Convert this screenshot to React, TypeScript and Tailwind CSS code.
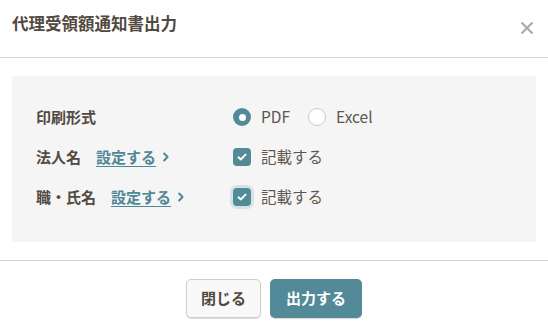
import { useState } from "react";

const FONT = "font-['Noto_Sans_CJK_JP','Noto_Sans',sans-serif]";

function Check() {
  return (
    <svg width="10" height="8" viewBox="0 0 10 8" fill="none">
      <path d="M1.5 4.2 3.9 6.4 8.5 1.6" stroke="white" strokeWidth="2" strokeLinecap="round" strokeLinejoin="round" />
    </svg>
  );
}

function Checkbox({ focused }: { focused?: boolean }) {
  return (
    <span
      className={`flex h-[18px] w-[18px] items-center justify-center rounded-[4px] bg-[#528b97] ${
        focused ? "ring-[3px] ring-[#d3e3e6]" : ""
      }`}
    >
      <Check />
    </span>
  );
}

function Radio({ checked }: { checked: boolean }) {
  return checked ? (
    <span className="flex h-[18px] w-[18px] items-center justify-center rounded-full bg-[#528b97]">
      <span className="h-[7px] w-[7px] rounded-full bg-white" />
    </span>
  ) : (
    <span className="h-[18px] w-[18px] rounded-full border border-[#cfcac4] bg-white" />
  );
}

function SetLink() {
  return (
    <a className="ml-[15px] flex items-center gap-[7px] text-[15px] font-bold text-[#4f8796] underline underline-offset-[3px]">
      設定する
      <svg width="6" height="10" viewBox="0 0 6 10" fill="none">
        <path d="M1.2 1.5 4.5 5 1.2 8.5" stroke="#4f8796" strokeWidth="2" strokeLinecap="round" strokeLinejoin="round" />
      </svg>
    </a>
  );
}

export default function App() {
  const [format, setFormat] = useState("pdf");

  return (
    <div className={`h-[336px] w-[548px] bg-white text-[#524940] ${FONT}`}>
      <div className="flex h-[58px] items-center justify-between border-b border-[#d7d4cf] pb-[10px] pl-3 pr-[14px]">
        <h1 className="text-[16.5px] font-bold">代理受領額通知書出力</h1>
        <svg width="14" height="14" viewBox="0 0 14 14" className="mt-[8px]">
          <path d="M1.5 1.5 12.5 12.5M12.5 1.5 1.5 12.5" stroke="#acacac" strokeWidth="2.2" />
        </svg>
      </div>

      <div className="border-b border-[#d7d4cf] px-3 py-[18px]">
        <div className="flex h-[166px] flex-col bg-[#f5f5f5] pl-6 pt-[21px]">
          <div className="flex h-10 items-center">
            <div className="w-[197px] text-[15px] font-bold">印刷形式</div>
            <div className="flex items-center text-[15.5px] text-[#5f574f]">
              <button className="flex items-center gap-[10px]" onClick={() => setFormat("pdf")}>
                <Radio checked={format === "pdf"} />
                PDF
              </button>
              <button className="ml-[18px] flex items-center gap-[10px]" onClick={() => setFormat("excel")}>
                <Radio checked={format === "excel"} />
                Excel
              </button>
            </div>
          </div>
          <div className="flex h-10 items-center">
            <div className="flex w-[197px] items-center">
              <span className="text-[15px] font-bold">法人名</span>
              <SetLink />
            </div>
            <label className="flex items-center gap-[10px] text-[15.5px] text-[#5f574f]">
              <Checkbox />
              記載する
            </label>
          </div>
          <div className="flex h-10 items-center">
            <div className="flex w-[197px] items-center">
              <span className="text-[15px] font-bold">職・氏名</span>
              <SetLink />
            </div>
            <label className="flex items-center gap-[10px] text-[15.5px] text-[#5f574f]">
              <Checkbox focused />
              記載する
            </label>
          </div>
        </div>
      </div>

      <div className="flex justify-center gap-[9px] pt-[18px]">
        <button className="h-[39px] w-[75px] rounded-[5px] border border-[#d2cfca] bg-[#f9f9f9] text-[15px] font-bold text-[#524940] shadow-[0_1px_1px_rgba(0,0,0,0.15)]">
          閉じる
        </button>
        <button className="h-[39px] w-[92px] rounded-[5px] bg-[#528b97] text-[15px] font-bold text-white shadow-[0_1px_1px_rgba(0,0,0,0.15)]">
          出力する
        </button>
      </div>
    </div>
  );
}
